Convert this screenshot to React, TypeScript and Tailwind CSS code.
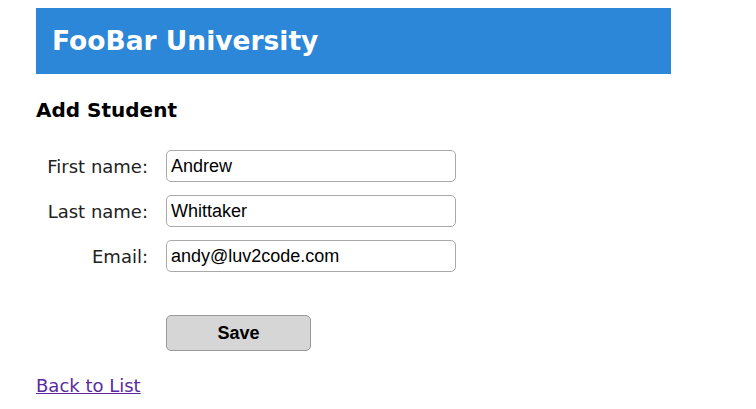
import React from "react";

const rows = [
  ["First name:", "Andrew"],
  ["Last name:", "Whittaker"],
  ["Email:", "andy@luv2code.com"],
];

export default function App() {
  return (
    <div className="w-[756px] h-[409px] bg-white overflow-hidden font-['DejaVu_Sans',Verdana,sans-serif]">
      <div className="pl-[36px] pt-[8px]">
        <div className="w-[635px] h-[66px] bg-[#2c87d9] flex items-center pl-[16px]">
          <h1 className="text-white font-bold text-[26.5px] leading-none">FooBar University</h1>
        </div>
        <h2 className="mt-[26px] text-[20px] font-bold text-black leading-none">Add Student</h2>
        <form className="mt-[30px] flex flex-col gap-[13px]">
          {rows.map(([label, value]) => (
            <div key={label} className="flex items-center">
              <label className="w-[112px] text-right text-[18px] text-[#222]">{label}</label>
              <input
                defaultValue={value}
                className="ml-[18px] w-[290px] h-[32px] rounded-[5px] border border-[#a9a9a9] px-[4px] text-[18px] text-black outline-none font-['Liberation_Sans',Arial,sans-serif]"
              />
            </div>
          ))}
          <div className="flex mt-[30px]">
            <div className="w-[112px]" />
            <button
              type="button"
              className="ml-[18px] w-[145px] h-[36px] rounded-[5px] border border-[#9a9a9a] bg-[#d6d6d6] text-[18px] font-bold text-black font-['Liberation_Sans',Arial,sans-serif]"
            >
              Save
            </button>
          </div>
        </form>
        <a href="#" className="block mt-[21px] w-fit text-[18px] text-[#5a2a9e] underline">Back to List</a>
      </div>
    </div>
  );
}
